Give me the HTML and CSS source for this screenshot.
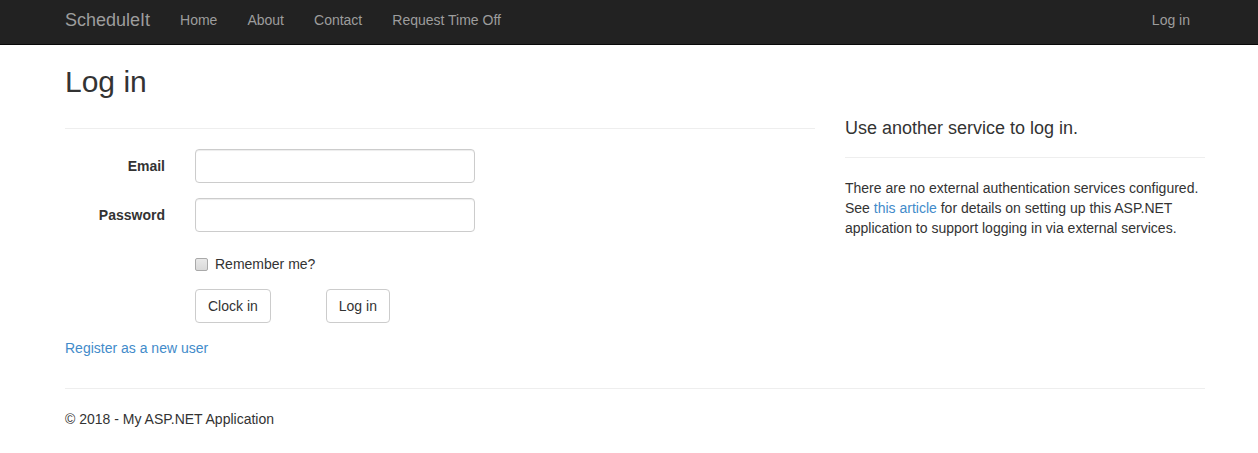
FILE: index.html
```html
<!DOCTYPE html>
<html>
<head>
<meta charset="utf-8">
<title>Log in - ScheduleIt</title>
<link rel="stylesheet" href="styles.css">
</head>
<body>
<nav class="navbar">
  <div class="container nav-inner">
    <a class="brand" href="#">ScheduleIt</a>
    <ul class="nav-links">
      <li><a href="#">Home</a></li>
      <li><a href="#">About</a></li>
      <li><a href="#">Contact</a></li>
      <li><a href="#">Request Time Off</a></li>
    </ul>
    <ul class="nav-links nav-right">
      <li><a href="#">Log in</a></li>
    </ul>
  </div>
</nav>
<main class="container body-content">
  <h2 class="page-title">Log in</h2>
  <div class="row">
    <section class="col-main">
      <hr class="rule rule-top">
      <form class="form-horizontal">
        <div class="form-group">
          <label class="control-label">Email</label>
          <div class="field"><input class="form-control" type="text"></div>
        </div>
        <div class="form-group">
          <label class="control-label">Password</label>
          <div class="field"><input class="form-control" type="password"></div>
        </div>
        <div class="form-group">
          <div class="control-spacer"></div>
          <div class="field checkbox">
            <label><input type="checkbox"> Remember me?</label>
          </div>
        </div>
        <div class="form-group">
          <div class="control-spacer"></div>
          <div class="field buttons">
            <button type="button" class="btn">Clock in</button>
            <button type="button" class="btn btn-second">Log in</button>
          </div>
        </div>
      </form>
      <p class="register"><a href="#">Register as a new user</a></p>
    </section>
    <section class="col-side">
      <h4 class="side-title">Use another service to log in.</h4>
      <hr class="rule">
      <p class="side-text">There are no external authentication services configured. See <a href="#">this article</a> for details on setting up this ASP.NET application to support logging in via external services.</p>
    </section>
  </div>
  <hr class="rule footer-rule">
  <footer class="footer">
    <p>&copy; 2018 - My ASP.NET Application</p>
  </footer>
</main>
</body>
</html>
```

FILE: styles.css
```css
* { box-sizing: border-box; }
html, body { margin: 0; padding: 0; }
body {
  font-family: "Liberation Sans", Arial, Helvetica, sans-serif;
  font-size: 14px;
  line-height: 20px;
  color: #333;
  background: #fff;
}
a { color: #428bca; text-decoration: none; }

.container { width: 1140px; margin-left: 65px; }

.navbar {
  background: #222;
  border-bottom: 1px solid #080808;
  height: 45px;
}
.nav-inner {
  display: flex;
  align-items: center;
  height: 44px;
  padding-bottom: 4px;
}
.brand {
  color: #9d9d9d;
  font-size: 18px;
  line-height: 20px;
  padding-right: 15px;
}
.nav-links {
  list-style: none;
  margin: 0;
  padding: 0;
  display: flex;
}
.nav-links a {
  display: block;
  color: #9d9d9d;
  padding: 0 15px;
  line-height: 20px;
}
.nav-right { margin-left: auto; }

.page-title {
  font-size: 30px;
  font-weight: 500;
  line-height: 33px;
  margin: 20px 0 10px;
}
.row { display: flex; align-items: flex-start; }
.col-main { width: 750px; margin-right: 30px; padding-top: 20px; }
.col-side { width: 360px; padding-top: 10px; }

.rule {
  border: 0;
  border-top: 1px solid #eee;
  height: 0;
  margin: 0;
}
.form-horizontal { margin-top: 20px; }
.form-group { display: flex; margin-bottom: 15px; }
.control-label {
  width: 100px;
  text-align: right;
  font-weight: bold;
  padding-top: 7px;
  margin-right: 30px;
}
.control-spacer { width: 100px; margin-right: 30px; }
.form-control {
  display: block;
  width: 280px;
  height: 34px;
  padding: 6px 12px;
  font: inherit;
  color: #555;
  background: #fff;
  border: 1px solid #ccc;
  border-radius: 4px;
  box-shadow: inset 0 1px 1px rgba(0,0,0,.075);
  outline: none;
}
.checkbox { padding-top: 7px; min-height: 27px; }
.checkbox label { display: flex; align-items: center; gap: 7px; }
.checkbox input {
  -webkit-appearance: none;
  appearance: none;
  width: 13px;
  height: 13px;
  margin: 0;
  border: 1px solid #a9a9a9;
  border-radius: 2px;
  background: linear-gradient(#e9e9e9, #d9d9d9);
}
.buttons { display: flex; }
.btn {
  font: inherit;
  color: #333;
  background: #fff;
  border: 1px solid #ccc;
  border-radius: 4px;
  padding: 6px 12px;
  line-height: 20px;
  height: 34px;
}
.btn-second { margin-left: 55px; }
.register { margin: 0 0 10px; }

.side-title {
  font-size: 18px;
  font-weight: 500;
  line-height: 20px;
  margin: 0 0 19px;
}
.side-text { margin: 20px 0 0; }

.footer-rule { margin-top: 20px; }
.footer p { margin: 20px 0 0; }
```
